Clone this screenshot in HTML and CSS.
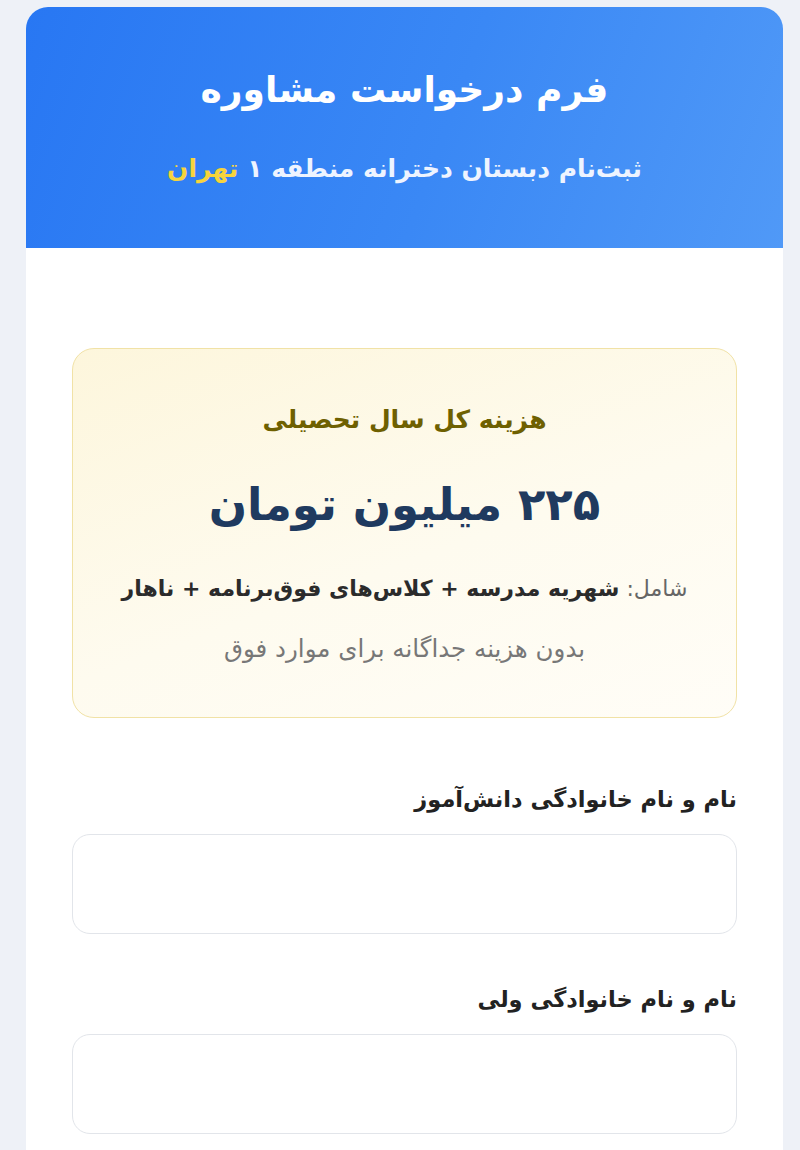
FILE: index.html
```html
<!DOCTYPE html>
<html lang="fa" dir="rtl">

<head>
    <meta charset="UTF-8">
    <meta name="viewport" content="width=device-width, initial-scale=1.0">
    <title>فرم درخواست مشاوره</title>
    <link rel="stylesheet" href="styles.css">
</head>

<body>
    <main class="form-card">
        <header class="form-header">
            <h1 class="form-title">فرم درخواست مشاوره</h1>
            <p class="form-subtitle">ثبت‌نام دبستان دخترانه منطقه ۱ <span class="city">تهران</span></p>
        </header>

        <section class="form-body">
            <div class="fee-box">
                <h2 class="fee-title">هزینه کل سال تحصیلی</h2>
                <p class="fee-price">۲۲۵ میلیون تومان</p>
                <p class="fee-includes">شامل: <strong>شهریه مدرسه + کلاس‌های فوق‌برنامه + ناهار</strong></p>
                <p class="fee-note">بدون هزینه جداگانه برای موارد فوق</p>
            </div>

            <form class="fields">
                <div class="field">
                    <label for="student">نام و نام خانوادگی دانش‌آموز</label>
                    <input type="text" id="student" class="input">
                </div>
                <div class="field">
                    <label for="parent">نام و نام خانوادگی ولی</label>
                    <input type="text" id="parent" class="input">
                </div>
            </form>
        </section>
    </main>
</body>
</html>
```

FILE: styles.css
```css
* {
    box-sizing: border-box;
}

body {
    margin: 0;
    padding: 7px 17px 0 26px;
    background-color: #eef1f7;
    font-family: "DejaVu Sans", sans-serif;
    color: #222;
}

.form-card {
    background-color: #fff;
    border-radius: 22px 22px 0 0;
    overflow: hidden;
    min-height: 1143px;
}

.form-header {
    height: 241px;
    padding-top: 61px;
    text-align: center;
    color: #fff;
    background-image: linear-gradient(110deg, #2877f3 0%, #3a88f5 55%, #5099f7 100%);
}

.form-title {
    margin: 0;
    font-size: 36px;
    font-weight: bold;
    line-height: 1.2;
}

.form-subtitle {
    margin: 43px 0 0;
    font-size: 25px;
    font-weight: bold;
    line-height: 1.2;
    color: #eef4ff;
}

.city {
    color: #f7d43c;
}

.form-body {
    padding: 100px 46px 0;
}

.fee-box {
    height: 370px;
    padding-top: 56px;
    text-align: center;
    border: 1px solid #f1e2a6;
    border-radius: 22px;
    background-image: linear-gradient(160deg, #fdf6dc 0%, #fefbef 55%, #fffdf7 100%);
}

.fee-title {
    margin: 0;
    font-size: 25px;
    font-weight: bold;
    color: #6e6000;
    line-height: 1.2;
}

.fee-price {
    margin: 43px 0 0;
    font-size: 45px;
    font-weight: bold;
    color: #1f3a5f;
    line-height: 1.2;
}

.fee-includes {
    margin: 44px 0 0;
    font-size: 22px;
    color: #666;
    line-height: 1.2;
}

.fee-includes strong {
    color: #2b2b2b;
}

.fee-note {
    margin: 32px 0 0;
    font-size: 24.5px;
    color: #777;
    line-height: 1.2;
}

.fields {
    padding-top: 68px;
}

.field {
    display: flex;
    flex-direction: column;
    gap: 21px;
    margin-bottom: 52px;
}

.field label {
    font-size: 22.5px;
    font-weight: bold;
    color: #222;
    line-height: 1.2;
}

.input {
    height: 100px;
    border: 1.5px solid #e2e5ea;
    border-radius: 18px;
    background-color: #fff;
    font-family: inherit;
    font-size: 20px;
    padding: 0 20px;
}
```
